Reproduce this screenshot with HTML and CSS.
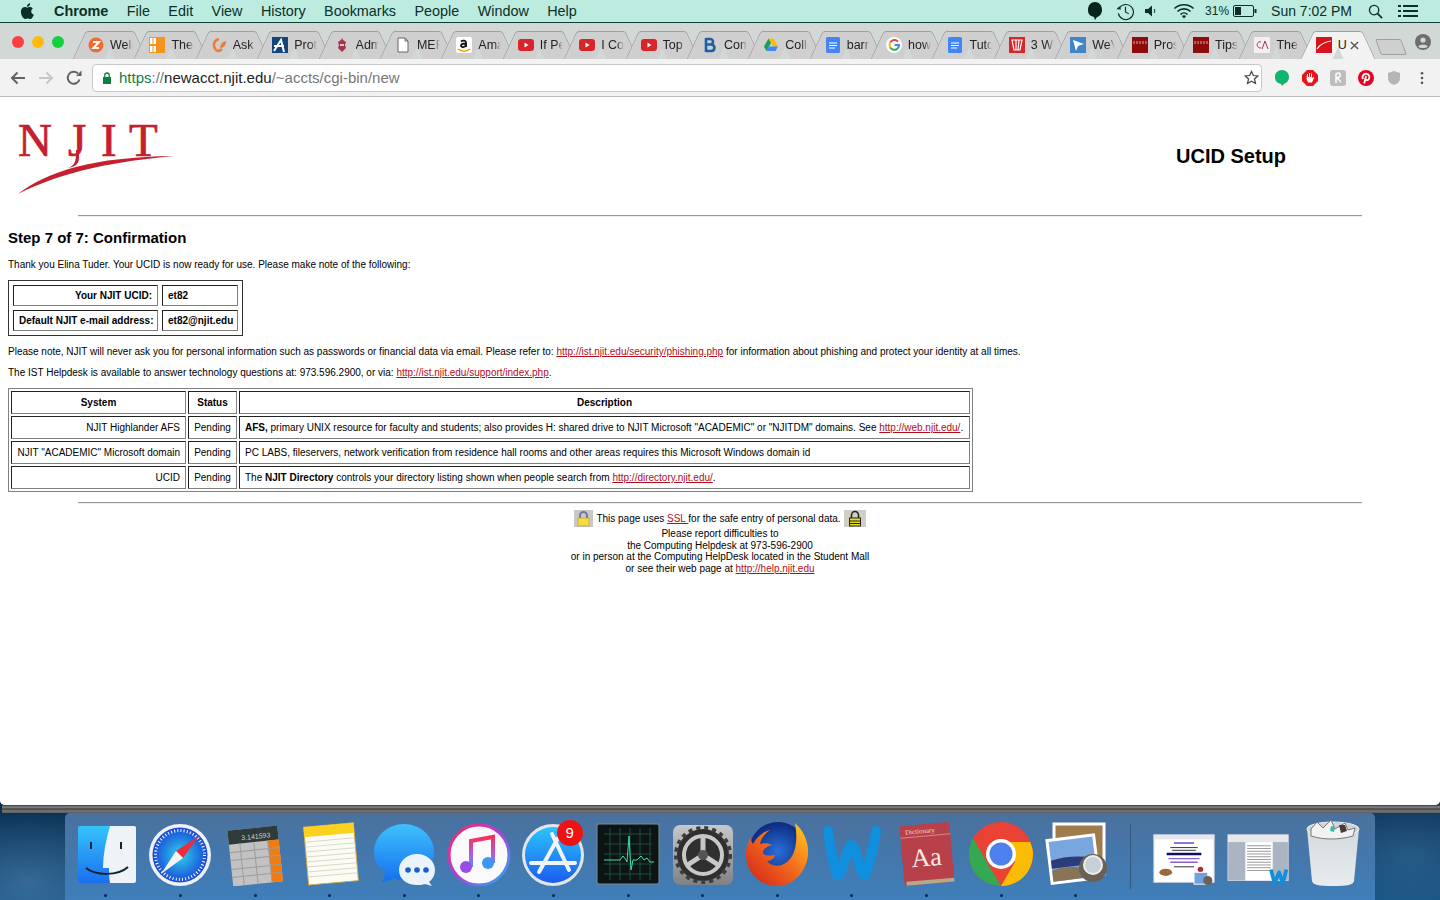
FILE: index.html
```html
<!DOCTYPE html>
<html>

<head>
    <meta charset="utf-8">
    <title>UCID Setup</title>
    <link rel="stylesheet" href="styles.css">
</head>

<body>
    <!-- mac menu bar -->
    <div class="menubar">
        <svg class="apple" viewBox="0 0 15 17"><path fill="#0b2f28" d="M11.2 8.5c0-1.9 1.600-2.800 1.600-2.900-.9-1.300-2.200-1.500-2.700-1.500-1.200-.1-2.200.7-2.800.7-.6 0-1.500-.7-2.500-.7C3.500 4.100 2.300 4.900 1.600 6.100.2 8.500 1.200 12.100 2.600 14.100c.7 1 1.500 2.100 2.500 2 1 0 1.400-.6 2.600-.6s1.500.6 2.600.6c1.100 0 1.800-1 2.400-2 .8-1.100 1.100-2.200 1.100-2.300 0 0-2.600-1-2.600-3.300zM9.300 2.700C9.800 2 10.200 1.100 10.100.2 9.300.2 8.400.7 7.800 1.400c-.5.6-1 1.500-.8 2.400.9.100 1.800-.4 2.300-1.100z"/></svg>
        <span class="menu-item menu-app">Chrome</span>
        <span class="menu-item">File</span>
        <span class="menu-item">Edit</span>
        <span class="menu-item">View</span>
        <span class="menu-item">History</span>
        <span class="menu-item">Bookmarks</span>
        <span class="menu-item">People</span>
        <span class="menu-item">Window</span>
        <span class="menu-item">Help</span>
        <div class="status">
            <svg class="st-bubble" viewBox="0 0 16 20"><path fill="#06231c" d="M8 1c4 0 7 3 7 8 0 4-3 7-5 7l-2 3-1-3C3 15 1 13 1 9c0-5 3-8 7-8z"/></svg>
            <svg class="st-clock" viewBox="0 0 20 20"><path fill="none" stroke="#0b2f28" stroke-width="1.200" d="M3.500 6.500A8 8 0 1 1 2.500 12M10 5v5.500l3.500 2"/><path fill="#0b2f28" d="M0.500 7.500l3-3 2 3.500z"/></svg>
            <svg class="st-vol" viewBox="0 0 14 14"><path fill="#0b2f28" d="M1 5h3l4-3.500v11L4 9H1z"/><path fill="none" stroke="#0b2f28" d="M10 5c1 1 1 3 0 4"/></svg>
            <svg class="st-wifi" viewBox="0 0 22 16"><path fill="none" stroke="#0b2f28" stroke-width="1.600" d="M1.500 5.500c5-5 14-5 19 0M4.500 8.500c3.500-3.500 9.500-3.500 13 0M7.500 11.500c2-2 5-2 7 0"/><path fill="#0b2f28" d="M11 15.500l-2.200-2.400c1.200-1 3.200-1 4.400 0z"/></svg>
            <span class="st-pct">31%</span>
            <svg class="st-batt" viewBox="0 0 24 12"><rect x=".5" y=".5" width="20" height="11" rx="1.500" fill="none" stroke="#0b2f28"/><rect x="2" y="2" width="6" height="8" fill="#0b2f28"/><rect x="21.500" y="4" width="2" height="4" fill="#0b2f28"/></svg>
            <span class="st-time">Sun 7:02 PM</span>
            <svg class="st-search" viewBox="0 0 16 16"><circle cx="6.500" cy="6.500" r="5" fill="none" stroke="#0b2f28" stroke-width="1.400"/><path stroke="#0b2f28" stroke-width="1.800" d="M10 10l5 5"/></svg>
            <svg class="st-list" viewBox="0 0 20 14"><path stroke="#0b2f28" stroke-width="2" d="M5 2h15M5 7h15M5 12h15M0 2h3M0 7h3M0 12h3"/></svg>
        </div>
    </div>

    <div class="window">
        <!-- tab strip -->
        <div class="tabstrip">
            <div class="lights"><i class="light red"></i><i class="light amber"></i><i class="light green"></i></div>
            <div class="tabs">
                <div class="tab"><svg class="fav" viewBox="0 0 16 16"><circle cx="8" cy="8" r="7.500" fill="#f26a2e"/><path fill="none" stroke="#fff" stroke-width="2" d="M5 5h6L5.500 11H11"/></svg><span class="tab-label">Welc</span></div>
                <div class="tab"><svg class="fav" viewBox="0 0 16 16"><rect width="16" height="16" fill="#f7941d"/><path fill="#fff" d="M1 1h2.500v6H1zM1 9h2.500v6H1zM4.500 1H7v6H4.500zM4.500 9H7v6H4.500z"/></svg><span class="tab-label">The</span></div>
                <div class="tab"><svg class="fav" viewBox="0 0 16 16"><path fill="none" stroke="#ef7a3c" stroke-width="2.500" d="M8 2C3 3 1 9 5 13c2 1.500 4 1 6-1"/><path fill="#ef7a3c" d="M15 4c0 4-2 7-6 7 0-3 2-6 6-7z"/></svg><span class="tab-label">Ask</span></div>
                <div class="tab"><svg class="fav" viewBox="0 0 16 16"><rect width="16" height="16" fill="#14447c"/><path fill="none" stroke="#fff" stroke-width="2" d="M2 14L9 3l3 12M2 9h10"/></svg><span class="tab-label">Prot</span></div>
                <div class="tab"><svg class="fav" viewBox="0 0 16 16"><path fill="#a8324a" d="M8 1l1 2 3 2-1 3 1 3-4 4-4-4 1-3-1-3 3-2z"/><path fill="#e8c8cc" d="M6 7h4v2H6z"/></svg><span class="tab-label">Adm</span></div>
                <div class="tab"><svg class="fav" viewBox="0 0 16 16"><path fill="#fff" stroke="#666" d="M3 1h7l3 3v11H3z"/><path fill="none" stroke="#666" d="M10 1v3h3"/></svg><span class="tab-label">MER</span></div>
                <div class="tab"><svg class="fav" viewBox="0 0 16 16"><rect width="16" height="16" rx="2" fill="#fff"/><path fill="none" stroke="#111" stroke-width="1.800" d="M5 4.500c2-1.500 5-1 5 1V10M10 6.500c-3 0-5 .5-5 2.200 0 2 4 1.800 5-.5"/><path fill="none" stroke="#f90" stroke-width="1.500" d="M2 12c3 3 9 3 12 0"/></svg><span class="tab-label">Ama</span></div>
                <div class="tab"><svg class="fav" viewBox="0 0 16 16"><rect y="2" width="16" height="12" rx="3" fill="#d9252a"/><path fill="#fff" d="M6.500 5.500l4 2.500-4 2.500z"/></svg><span class="tab-label">If Pe</span></div>
                <div class="tab"><svg class="fav" viewBox="0 0 16 16"><rect y="2" width="16" height="12" rx="3" fill="#d9252a"/><path fill="#fff" d="M6.500 5.500l4 2.500-4 2.500z"/></svg><span class="tab-label">I Co</span></div>
                <div class="tab"><svg class="fav" viewBox="0 0 16 16"><rect y="2" width="16" height="12" rx="3" fill="#d9252a"/><path fill="#fff" d="M6.500 5.500l4 2.500-4 2.500z"/></svg><span class="tab-label">Top</span></div>
                <div class="tab"><svg class="fav" viewBox="0 0 16 16"><path fill="none" stroke="#1d5fa8" stroke-width="2.600" d="M4 1v14M4 2h4c4 0 4 5.500 0 5.500H4M4 7.500h5c4.500 0 4.500 6.500 0 6.500H4"/></svg><span class="tab-label">Com</span></div>
                <div class="tab"><svg class="fav" viewBox="0 0 16 16"><path fill="#fbbc04" d="M5.500 1.500h5L15 9.500h-5z"/><path fill="#1a9c5c" d="M5.500 1.500L1 9.500l2.500 4.500L8 6z"/><path fill="#4285f4" d="M3.500 14h9L15 9.500H6z"/></svg><span class="tab-label">Colle</span></div>
                <div class="tab"><svg class="fav" viewBox="0 0 16 16"><rect x="1" width="14" height="16" rx="1.500" fill="#4285f4"/><path stroke="#fff" d="M4 6h8M4 8.500h8M4 11h6"/></svg><span class="tab-label">barr</span></div>
                <div class="tab"><svg class="fav" viewBox="0 0 16 16"><circle cx="8" cy="8" r="8" fill="#fff"/><path fill="none" stroke="#ea4335" stroke-width="2" d="M12 4.500A5 5 0 0 0 4.200 5.500"/><path fill="none" stroke="#fbbc05" stroke-width="2" d="M4.200 5.500a5 5 0 0 0 0 5"/><path fill="none" stroke="#34a853" stroke-width="2" d="M4.200 10.500a5 5 0 0 0 7.500 1"/><path fill="none" stroke="#4285f4" stroke-width="2" d="M11.700 11.500A5 5 0 0 0 13 8H8.500"/></svg><span class="tab-label">how</span></div>
                <div class="tab"><svg class="fav" viewBox="0 0 16 16"><rect x="1" width="14" height="16" rx="1.500" fill="#4285f4"/><path stroke="#fff" d="M4 6h8M4 8.500h8M4 11h6"/></svg><span class="tab-label">Tuto</span></div>
                <div class="tab"><svg class="fav" viewBox="0 0 16 16"><rect width="16" height="16" fill="#d9252a"/><path fill="none" stroke="#fff" stroke-width="1.200" d="M3 3h10L11 13H5zM7 3l0 10M10 3l-1 10"/></svg><span class="tab-label">3 W</span></div>
                <div class="tab"><svg class="fav" viewBox="0 0 16 16"><rect width="16" height="16" fill="#3f86c9"/><path fill="#fff" d="M3 3l11 4-6 2-2 5z"/></svg><span class="tab-label">WeV</span></div>
                <div class="tab"><svg class="fav" viewBox="0 0 16 16"><rect width="16" height="16" fill="#8e0b0b"/><path stroke="#f4d6d6" stroke-width=".8" d="M2 4v3M5 4v3M8 4v3M11 4v3M14 4v3"/></svg><span class="tab-label">Pros</span></div>
                <div class="tab"><svg class="fav" viewBox="0 0 16 16"><rect width="16" height="16" fill="#8e0b0b"/><path stroke="#f4d6d6" stroke-width=".8" d="M2 4v3M5 4v3M8 4v3M11 4v3M14 4v3"/></svg><span class="tab-label">Tips</span></div>
                <div class="tab"><svg class="fav" viewBox="0 0 16 16"><rect width="16" height="16" fill="#f4f0f2"/><path fill="none" stroke="#a03060" d="M7 5c-4-2-6 6 0 6M8 12l3-8 3 8"/></svg><span class="tab-label">The</span></div>
                <div class="tab tab-active"><svg class="fav" viewBox="0 0 16 16"><rect width="16" height="16" fill="#d8131c"/><path fill="none" stroke="#fff" stroke-width="1.200" d="M1 12C4 7 9 5 15 4"/></svg><span class="tab-label tab-label-short">U</span><svg class="tab-close" viewBox="0 0 10 10"><path stroke="#555" stroke-width="1.500" d="M1 1l8 8M9 1l-8 8"/></svg></div>
            </div>
            <div class="newtab"></div>
            <svg class="profile" viewBox="0 0 16 16"><circle cx="8" cy="8" r="8" fill="#6e6e6e"/><circle cx="8" cy="6" r="2.600" fill="#d2d8d6"/><path fill="#d2d8d6" d="M3.200 12.500c1-2.500 8.600-2.500 9.600 0-2 2-7.600 2-9.600 0z"/></svg>
        </div>

        <!-- url bar and extensions -->
        <div class="toolbar">
            <svg class="nav nav-back" viewBox="0 0 16 14"><path fill="none" stroke="#5f6368" stroke-width="2" d="M15 7H2M7.500 1.500L2 7l5.500 5.500"/></svg>
            <svg class="nav nav-fwd" viewBox="0 0 16 14"><path fill="none" stroke="#c4c6c8" stroke-width="2" d="M1 7h13M8.500 1.500L14 7l-5.500 5.500"/></svg>
            <svg class="nav nav-reload" viewBox="0 0 16 16"><path fill="none" stroke="#5f6368" stroke-width="2" d="M13.500 9.500A6 6 0 1 1 12 3.500"/><path fill="#5f6368" d="M10 6h5.500V.500z"/></svg>
            <div class="omnibox">
                <svg class="lock" viewBox="0 0 10 12"><path fill="#0b8043" d="M1 5h8v7H1z"/><path fill="none" stroke="#0b8043" stroke-width="1.300" d="M2.800 5V3.200a2.200 2.200 0 0 1 4.400 0V5"/></svg>
                <span class="url"><span class="url-scheme">https</span><span class="url-path">://</span><span class="url-host">newacct.njit.edu</span><span class="url-path">/~accts/cgi-bin/new</span></span>
                <svg class="star" viewBox="0 0 16 16"><path fill="none" stroke="#444" stroke-width="1.300" d="M8 1.500l2 4.400 4.700.5-3.500 3.200 1 4.700L8 11.900l-4.200 2.400 1-4.700L1.300 6.400 6 5.900z"/></svg>
            </div>
            <div class="extensions">
                <svg class="ext" viewBox="0 0 16 16"><path fill="#0fb46f" d="M8 0c4 0 7 3 7 7 0 4-3 6-5 7l-2 2-1-2C3 13 1 11 1 7c0-4 3-7 7-7z"/></svg>
                <svg class="ext" viewBox="0 0 16 16"><path fill="#e8141c" d="M5 0h6l5 5v6l-5 5H5l-5-5V5z"/><path fill="#fff" d="M5 4h1v3h1V3h1v4h1V3.500h1V8l1.500-1 .5 1-2 4.500H6L4.500 9z"/></svg>
                <svg class="ext" viewBox="0 0 16 16"><rect width="16" height="16" rx="3" fill="#bdbdbd"/><path fill="none" stroke="#fff" stroke-width="1.500" d="M6 13V4c2-2 5-1 4 2-.5 1.500-2 2-4 2 3 0 3 3 5 4"/></svg>
                <svg class="ext" viewBox="0 0 16 16"><circle cx="8" cy="8" r="8" fill="#e60023"/><path fill="none" stroke="#fff" stroke-width="1.800" d="M5 9C3.500 6 6 3.500 8.500 3.800c3 .3 3.500 3.500 2.200 5.500-1 1.500-3 1.200-3-.5M8 6l-1.800 7.500"/></svg>
                <svg class="ext" viewBox="0 0 16 16"><path fill="#b5b5b5" d="M8 1l6 2v5c0 4-3 6-6 7-3-1-6-3-6-7V3z"/></svg>
                <svg class="ext ext-menu" viewBox="0 0 4 16"><g fill="#555"><circle cx="2" cy="2.500" r="1.500"/><circle cx="2" cy="8" r="1.500"/><circle cx="2" cy="13.500" r="1.500"/></g></svg>
            </div>
        </div>

        <!-- the actual page -->
        <div class="page">
            <div class="page-head">
                <svg class="logo" viewBox="0 0 170 90">
                    <text x="10" y="47" class="logo-txt">N</text>
                    <text x="60" y="47" class="logo-txt">J</text>
                    <text x="93" y="47" class="logo-txt">I</text>
                    <text x="121" y="47" class="logo-txt">T</text>
                    <path fill="#c4202f" d="M10 85C40 62 85 48 166 47 110 52 55 62 10 85z"/>
                    <path fill="#c4202f" d="M60 59c6-2 8-6 8-14l0-4 3 0 0 8c0 6-4 9-11 10z"/>
                </svg>
                <h1 class="page-title">UCID Setup</h1>
            </div>
            <hr class="rule">
            <h2 class="step">Step 7 of 7: Confirmation</h2>
            <p class="note note-first">Thank you Elina Tuder. Your UCID is now ready for use. Please make note of the following:</p>
            <table class="info">
                <tr><td class="info-key">Your NJIT UCID:</td><td class="info-val">et82</td></tr>
                <tr><td class="info-key">Default NJIT e-mail address:</td><td class="info-val">et82@njit.edu</td></tr>
            </table>
            <p class="note note-phish">Please note, NJIT will never ask you for personal information such as passwords or financial data via email. Please refer to: <a href="#">http://ist.njit.edu/security/phishing.php</a> for information about phishing and protect your identity at all times.</p>
            <p class="note note-help">The IST Helpdesk is available to answer technology questions at: 973.596.2900, or via: <a href="#">http://ist.njit.edu/support/index.php</a>.</p>
            <table class="systems">
                <tr><th class="col-sys">System</th><th class="col-status">Status</th><th class="col-desc">Description</th></tr>
                <tr><td class="sys">NJIT Highlander AFS</td><td class="status-cell">Pending</td><td class="desc"><b>AFS,</b> primary UNIX resource for faculty and students; also provides H: shared drive to NJIT Microsoft "ACADEMIC" or "NJITDM" domains. See <a href="#">http://web.njit.edu/</a>.</td></tr>
                <tr><td class="sys">NJIT "ACADEMIC" Microsoft domain</td><td class="status-cell">Pending</td><td class="desc">PC LABS, fileservers, network verification from residence hall rooms and other areas requires this Microsoft Windows domain id</td></tr>
                <tr><td class="sys">UCID</td><td class="status-cell">Pending</td><td class="desc">The <b>NJIT Directory</b> controls your directory listing shown when people search from <a href="#">http://directory.njit.edu/</a>.</td></tr>
            </table>
            <hr class="rule rule-foot">
            <div class="foot">
                <div class="foot-ssl">
                    <svg class="padlock" viewBox="0 0 19 17"><rect width="19" height="17" fill="#c8c8c8"/><path fill="none" stroke="#77779a" stroke-width="2" d="M6 9V5.500a3.500 3.500 0 0 1 7 0V9"/><rect x="4" y="8" width="11" height="8" fill="#f5d94a" stroke="#b89a20" stroke-width=".6"/></svg>
                    <span>This page uses <a href="#">SSL </a>for the safe entry of personal data.</span>
                    <svg class="padlock" viewBox="0 0 22 17"><rect width="22" height="17" fill="#cfcfc8"/><path fill="none" stroke="#222" stroke-width="1.500" d="M7.500 8V5a3.500 3.500 0 0 1 7 0v3"/><rect x="5.500" y="8" width="11" height="8" fill="#e4e020" stroke="#222"/><path stroke="#222" d="M6 11h10M6 13.500h10"/></svg>
                </div>
                Please report difficulties to<br>
                the Computing Helpdesk at 973-596-2900<br>
                or in person at the Computing HelpDesk located in the Student Mall<br>
                or see their web page at <a href="#">http://help.njit.edu</a>
            </div>
        </div>
    </div>
    <div class="window-edge"></div>

    <!-- dock -->
    <div class="dock">
        <div class="dock-item"><svg class="dock-icon" viewBox="0 0 64 64">
            <defs><linearGradient id="fnd" x1="0" y1="0" x2="0" y2="1"><stop offset="0" stop-color="#35c3fb"/><stop offset="1" stop-color="#1a6ff0"/></linearGradient></defs>
            <rect x="4" y="4" width="58" height="57" rx="2" fill="url(#fnd)"/>
            <path fill="#eef3f8" d="M36 4h24a2 2 0 0 1 2 2v53a2 2 0 0 1-2 2H36c-1-6-1-10-1-15h-6c0-14 3-28 7-42z"/>
            <path stroke="#123" stroke-width="2" d="M17 20v7M47 20v7"/>
            <path fill="none" stroke="#123" stroke-width="2" d="M12 46c10 8 32 8 42-1"/>
        </svg><i class="dot"></i></div>
        <div class="dock-item"><svg class="dock-icon" viewBox="0 0 64 64">
            <defs><radialGradient id="saf"><stop offset="0" stop-color="#2fd3ee"/><stop offset="1" stop-color="#1a48d8"/></radialGradient></defs>
            <circle cx="32" cy="33" r="31" fill="#eef2f5"/>
            <circle cx="32" cy="33" r="27.500" fill="url(#saf)"/>
            <circle cx="32" cy="33" r="24.500" fill="none" stroke="#fff" stroke-width="3" stroke-dasharray="1 2.200"/>
            <path fill="#ee2c3c" d="M51 14L28 29l7 7z"/>
            <path fill="#f5f5f5" d="M13 52l15-23 7 7z"/>
        </svg><i class="dot"></i></div>
        <div class="dock-item"><svg class="dock-icon" viewBox="0 0 64 64"><g transform="rotate(-6 32 32)">
            <rect x="7" y="6" width="50" height="56" fill="#c2c2c2"/>
            <rect x="7" y="6" width="50" height="14" fill="#2f3a3a"/>
            <text x="20" y="17" class="calc-txt">3.141593</text>
            <rect x="46" y="20" width="11" height="42" fill="#ef7b11"/>
            <path stroke="#9c9c9c" d="M18 20v42M32 20v42M46 20v42M7 28h50M7 36h50M7 45h50M7 53h50"/>
        </g></svg><i class="dot"></i></div>
        <div class="dock-item"><svg class="dock-icon" viewBox="0 0 64 64"><g transform="rotate(-5 32 32)">
            <rect x="8" y="3" width="50" height="58" fill="#fdfcf2" stroke="#c9a64a"/>
            <rect x="8" y="3" width="50" height="10" fill="#fbd31e"/>
            <path stroke="#d8d8d2" d="M8 18h50M8 23h50M8 28h50M8 33h50M8 38h50M8 43h50M8 48h50M8 53h50"/>
        </g></svg><i class="dot"></i></div>
        <div class="dock-item"><svg class="dock-icon" viewBox="0 0 64 64">
            <defs><linearGradient id="msg" x1="0" y1="0" x2="0" y2="1"><stop offset="0" stop-color="#3fc0fb"/><stop offset="1" stop-color="#1570ef"/></linearGradient></defs>
            <path fill="url(#msg)" d="M32 2c16 0 30 12 30 28S48 58 32 58c-4 0-8-.5-11-2-3 3-8 4-12 4 3-3 4-6 4-10C6 45 2 38 2 30 2 14 16 2 32 2z"/>
            <path fill="#eaf3fb" d="M45 32c10 0 18 7 18 16 0 5-2 9-6 12l3 4-7-2c-3 1-5 1-8 1-10 0-18-6-18-15s8-16 18-16z"/>
            <g fill="#1b5fc4"><circle cx="36" cy="48" r="2.800"/><circle cx="45" cy="48" r="2.800"/><circle cx="54" cy="48" r="2.800"/></g>
        </svg><i class="dot"></i></div>
        <div class="dock-item"><svg class="dock-icon" viewBox="0 0 64 64">
            <defs><linearGradient id="itn" x1="0" y1="0" x2="1" y2="1"><stop offset="0" stop-color="#f52c5c"/><stop offset=".5" stop-color="#b43ce0"/><stop offset="1" stop-color="#1cb5f0"/></linearGradient>
            <linearGradient id="itn2" x1="0" y1="0" x2="0" y2="1"><stop offset="0" stop-color="#f7305a"/><stop offset=".6" stop-color="#b05ae8"/><stop offset="1" stop-color="#3a9cf2"/></linearGradient></defs>
            <circle cx="32" cy="33" r="30" fill="#fafafa" stroke="url(#itn)" stroke-width="3"/>
            <path fill="none" stroke="url(#itn2)" stroke-width="4" d="M24 45V19l22-4v26"/>
            <circle cx="19" cy="45" r="6" fill="#9a4ce8"/><circle cx="41" cy="41" r="6" fill="#3d96f0"/>
        </svg><i class="dot"></i></div>
        <div class="dock-item"><svg class="dock-icon" viewBox="0 0 64 64">
            <defs><linearGradient id="aps" x1="0" y1="0" x2="0" y2="1"><stop offset="0" stop-color="#2bc4fb"/><stop offset="1" stop-color="#1c5cee"/></linearGradient></defs>
            <circle cx="32" cy="33" r="31" fill="#e2e6ea"/>
            <circle cx="32" cy="33" r="28" fill="url(#aps)"/>
            <path stroke="#f0f4f8" stroke-width="4" stroke-linecap="round" d="M31 12l17 36M37 16L18 50M10 41h44"/>
        </svg><span class="badge">9</span><i class="dot"></i></div>
        <div class="dock-item"><svg class="dock-icon" viewBox="0 0 64 64">
            <rect x="1" y="2" width="62" height="60" rx="2" fill="#0d1414" stroke="#7a8c94"/>
            <path stroke="#1f4a40" d="M8 12h48M8 22h48M8 32h48M8 42h48M8 52h48M14 6v52M24 6v52M34 6v52M44 6v52M54 6v52"/>
            <path fill="none" stroke="#3ae0a8" d="M8 38h16l3-4 3 4 1 2 2-26 2 34 2-10h4l4-4 3 4 3-2 3 4h4"/>
        </svg><i class="dot"></i></div>
        <div class="dock-item"><svg class="dock-icon" viewBox="0 0 64 64">
            <defs><linearGradient id="prf" x1="0" y1="0" x2="0" y2="1"><stop offset="0" stop-color="#c6c8ca"/><stop offset="1" stop-color="#7e8285"/></linearGradient></defs>
            <rect x="2" y="3" width="60" height="60" rx="7" fill="url(#prf)"/>
            <circle cx="32" cy="33" r="26" fill="#2f2f2f"/>
            <circle cx="32" cy="33" r="27" fill="none" stroke="#3c3c3c" stroke-width="4" stroke-dasharray="4 4"/>
            <circle cx="32" cy="33" r="19" fill="none" stroke="#c8c8c8" stroke-width="4"/>
            <path stroke="#c8c8c8" stroke-width="5" d="M32 33V14M32 33L15 44M32 33l17 11"/>
            <circle cx="32" cy="33" r="5" fill="#555"/>
        </svg><i class="dot"></i></div>
        <div class="dock-item"><svg class="dock-icon dock-icon-tall" viewBox="0 0 64 68">
            <defs><radialGradient id="fxg"><stop offset="0" stop-color="#2a6fd8"/><stop offset="1" stop-color="#0c2a80"/></radialGradient>
            <linearGradient id="fxo" x1="1" y1="0" x2="0" y2="1"><stop offset="0" stop-color="#ffd21f"/><stop offset=".45" stop-color="#f4701d"/><stop offset="1" stop-color="#d11b1b"/></linearGradient></defs>
            <circle cx="33" cy="32" r="29" fill="url(#fxg)"/>
            <path fill="url(#fxo)" d="M50 4c9 8 14 20 13 32-2 18-15 31-32 31C14 67 0 52 1 34c0-6 2-11 5-15 0 3 1 5 2 6 3-6 9-12 17-14-6 4-9 9-10 14 3-1 8-1 12 1-4 1-8 3-9 7 0 4 6 4 12 3-1 4-5 6-8 6 4 6 14 6 20 1 9-7 11-22 8-39z"/>
        </svg><i class="dot"></i></div>
        <div class="dock-item"><svg class="dock-icon" viewBox="0 0 64 64">
            <path fill="none" stroke="#0f8fde" stroke-width="10" stroke-linecap="round" stroke-linejoin="round" d="M8 9c2 15 5 30 9 44 5 4 9-26 14-30 6 0 8 30 14 30 5-14 9-29 11-44"/>
        </svg><i class="dot"></i></div>
        <div class="dock-item"><svg class="dock-icon" viewBox="0 0 64 64"><g transform="rotate(-5 32 32)">
            <rect x="8" y="2" width="50" height="60" rx="2" fill="#b8404a"/>
            <rect x="10" y="58" width="48" height="4" fill="#b8a888"/>
            <path stroke="#d68a8a" d="M8 14h50"/>
            <text x="13" y="11" class="dict-name">Dictionary</text>
            <text x="17" y="44" class="dict-aa">Aa</text>
        </g></svg><i class="dot"></i></div>
        <div class="dock-item"><svg class="dock-icon" viewBox="0 0 64 64">
            <circle cx="32" cy="32" r="32" fill="#ea4335"/>
            <path fill="#34a853" d="M4 16L20 44l12 20C14 64 0 50 0 32c0-6 1.500-11 4-16z"/>
            <path fill="#fbbc05" d="M32 20h29c2 4 3 8 3 12 0 18-14 32-32 32l14-24z"/>
            <circle cx="32" cy="32" r="15" fill="#fff"/>
            <circle cx="32" cy="32" r="11.500" fill="#4e80ee"/>
        </svg><i class="dot"></i></div>
        <div class="dock-item"><svg class="dock-icon" viewBox="0 0 64 64">
            <rect x="10" y="2" width="50" height="50" fill="#a07c4c" stroke="#fff" stroke-width="3"/>
            <g transform="rotate(-7 30 38)">
                <rect x="4" y="14" width="50" height="46" fill="#fff"/>
                <rect x="7" y="17" width="44" height="40" fill="#7aa6e0"/>
                <path fill="#2c3c78" d="M7 36c12-3 28-2 44 2v6H7z"/>
                <path fill="#8a7458" d="M7 46c14-4 30 0 44 4v7H7z"/>
            </g>
            <circle cx="49" cy="46" r="14" fill="#6b6055"/>
            <circle cx="49" cy="43" r="9" fill="#c6d0d6" stroke="#eee" stroke-width="2"/>
        </svg><i class="dot"></i></div>
        <div class="dock-sep"></div>
        <div class="dock-item"><svg class="dock-icon" viewBox="0 0 70 70">
            <rect x="2" y="14" width="66" height="52" fill="#fff" stroke="#ccd"/>
            <rect x="2" y="14" width="66" height="5" fill="#e4e6ea"/>
            <path stroke="#6a2fc8" stroke-width="1.500" d="M24 23h22"/>
            <path stroke="#222" stroke-width="1" d="M20 28h30M22 31h26"/>
            <path stroke="#101060" stroke-width="3" d="M16 35h38"/>
            <path stroke="#8a5fd8" stroke-width="1.500" d="M18 40h34M20 44h30"/>
            <path stroke="#222" stroke-width="1" d="M24 49h22"/>
            <ellipse cx="15" cy="55" rx="7" ry="4" fill="#9a6a3a"/>
            <circle cx="53" cy="52" r="3" fill="#a83030"/>
            <rect x="46" y="55" width="15" height="13" fill="#6fa0e0" stroke="#fff"/>
            <circle cx="61" cy="64" r="5" fill="#6b6055"/>
        </svg></div>
        <div class="dock-item"><svg class="dock-icon" viewBox="0 0 70 70">
            <rect x="1" y="14" width="66" height="50" fill="#aab4c2" stroke="#ccd"/>
            <rect x="1" y="14" width="66" height="8" fill="#e6e8ec"/>
            <rect x="20" y="22" width="30" height="42" fill="#fff"/>
            <path stroke="#777" stroke-width=".8" d="M22 26h26M22 29h26M22 32h26M22 35h26M22 38h26M22 41h26M22 44h26M22 47h26M22 50h26M22 53h26"/>
            <path fill="none" stroke="#0f8fde" stroke-width="4" stroke-linejoin="round" d="M48 52l4 15 5-12 4 12 4-15"/>
        </svg></div>
        <div class="dock-item"><svg class="dock-icon dock-icon-tall" viewBox="0 0 64 68">
            <defs><linearGradient id="trs" x1="0" y1="0" x2="0" y2="1"><stop offset="0" stop-color="#d4dadd"/><stop offset="1" stop-color="#e8ecee"/></linearGradient></defs>
            <path fill="url(#trs)" d="M6 10h52l-5 52c-1 4-6 5-21 5s-20-1-21-5z"/>
            <ellipse cx="32" cy="10" rx="26" ry="7" fill="#cfd4d6" stroke="#eee"/>
            <path fill="#f2f2f2" stroke="#777" d="M10 10l6-7 6 6 8-8 4 9 10-6 3 7 7-2-2 8c-14 4-30 4-42 0z"/>
            <path fill="#4a3a3a" d="M38 6l6 0 2 6-6 2z"/><path fill="#3ab8a8" d="M30 7l4 1-1 5-4-1z"/>
        </svg></div>
    </div>
</body>

</html>
```
FILE: styles.css
```css
* {
    box-sizing: border-box;
}

html, body {
    height: 100%;
}

body {
    margin: 0;
    height: 900px;
    overflow: hidden;
    display: flex;
    flex-direction: column;
    font-family: "Liberation Sans", Arial, sans-serif;
    color: #000;
    background-color: #0f3f6a;
    background-image:
        radial-gradient(ellipse at 2% 98%, rgba(120, 165, 205, 0.35), rgba(120, 165, 205, 0) 6%),
        radial-gradient(ellipse at 98% 95%, rgba(90, 150, 200, 0.3), rgba(90, 150, 200, 0) 6%),
        linear-gradient(#08294a 88%, #14507f);
}

/* menu bar */
.menubar {
    height: 22px;
    flex: none;
    display: flex;
    align-items: center;
    padding-left: 20px;
    background-color: #bcecdf;
    color: #0b2f28;
    font-size: 14.4px;
}

.apple {
    width: 15px;
    height: 17px;
    margin-right: 19px;
}

.menu-item {
    margin-right: 18.4px;
}

.menu-app {
    font-weight: bold;
}

.status {
    margin-left: auto;
    display: flex;
    align-items: center;
    height: 100%;
    padding-right: 22px;
}

.st-bubble { width: 16px; height: 20px; margin-right: 13px; }
.st-clock { width: 19px; height: 19px; margin-right: 9px; }
.st-vol { width: 14px; height: 14px; margin-right: 15px; }
.st-wifi { width: 22px; height: 16px; margin-right: 10px; }
.st-pct { font-size: 12px; margin-right: 4px; }
.st-batt { width: 24px; height: 12px; margin-right: 14px; }
.st-time { font-size: 14px; margin-right: 16px; }
.st-search { width: 15px; height: 15px; margin-right: 15px; }
.st-list { width: 20px; height: 14px; }

/* browser window */
.window {
    flex: none;
    height: 783px;
    display: flex;
    flex-direction: column;
    background-color: #fff;
    border-radius: 0 0 5px 5px;
    overflow: hidden;
}

.tabstrip {
    height: 37px;
    flex: none;
    display: flex;
    align-items: flex-end;
    background-color: #d2d8d6;
    border-top: 1px solid #123f35;
    position: relative;
}

.lights {
    position: absolute;
    left: 12px;
    top: 13px;
    display: flex;
    gap: 8px;
}

.light {
    width: 12px;
    height: 12px;
    border-radius: 50%;
}

.red { background-color: #fc3d44; }
.amber { background-color: #fdbb0e; }
.green { background-color: #14d040; }

.tabs {
    display: flex;
    margin-left: 79px;
    height: 28px;
}

.tab {
    width: 61.4px;
    height: 28px;
    position: relative;
    display: flex;
    align-items: center;
    padding: 0 0 0 9px;
    font-size: 12.5px;
    color: #222;
    isolation: isolate;
}

.tab:before, .tab:after {
    content: "";
    position: absolute;
    top: 0;
    bottom: 0;
    width: 50%;
    z-index: -1;
    background-color: #cfcfcf;
    border-top: 1px solid #a0a0a0;
}

.tab:before {
    left: 0;
    border-left: 1px solid #a0a0a0;
    border-top-left-radius: 3px;
    transform: skewX(-25deg);
}

.tab:after {
    right: 0;
    border-right: 1px solid #a0a0a0;
    border-top-right-radius: 3px;
    transform: skewX(25deg);
}

.tab-active {
    z-index: 2;
}

.tab-active:before, .tab-active:after {
    background-color: #f2f2f2;
}

.fav {
    width: 16px;
    height: 16px;
    flex: none;
    margin-right: 6px;
}

.tab-label {
    width: 23px;
    overflow: hidden;
    white-space: nowrap;
    -webkit-mask-image: linear-gradient(to right, #000 70%, transparent);
    mask-image: linear-gradient(to right, #000 70%, transparent);
}

.tab-label-short {
    width: 10px;
    -webkit-mask-image: none;
    mask-image: none;
}

.tab-close {
    width: 9px;
    height: 9px;
    margin-left: 2px;
}

.newtab {
    width: 26px;
    height: 16px;
    margin: 0 0 4px 10px;
    background-color: #cfcfcf;
    border: 1px solid #a0a0a0;
    border-radius: 2px;
    transform: skewX(20deg);
}

.profile {
    width: 16px;
    height: 16px;
    position: absolute;
    right: 9px;
    top: 11px;
}

/* toolbar */
.toolbar {
    height: 38px;
    flex: none;
    display: flex;
    align-items: center;
    padding-left: 10px;
    background-color: #f2f2f2;
    border-bottom: 1px solid #bdbdbd;
}

.nav {
    flex: none;
    width: 16px;
    height: 14px;
}

.nav-fwd { margin-left: 12px; }
.nav-reload { margin-left: 12px; height: 16px; }

.omnibox {
    flex: none;
    width: 1170px;
    height: 28px;
    margin-left: 10px;
    display: flex;
    align-items: center;
    padding: 0 2px 0 9px;
    background-color: #fff;
    border: 1px solid #c8c8c8;
    border-radius: 4px;
}

.lock {
    width: 10px;
    height: 12px;
    margin-right: 7px;
}

.url {
    font-size: 15px;
}

.url-scheme { color: #0b8043; }
.url-host { color: #222; }
.url-path { color: #777; }

.star {
    width: 15px;
    height: 15px;
    margin-left: auto;
}

.extensions {
    display: flex;
    align-items: center;
    padding-left: 12px;
}

.ext {
    width: 16px;
    height: 16px;
    margin-right: 12px;
}

.ext-menu {
    width: 4px;
    height: 14px;
    margin-left: 6px;
}

/* page content */
.page {
    flex: 1;
    padding: 0 8px;
    font-size: 10px;
    background-color: #fff;
}

.page a {
    color: #b30c1c;
}

.page-head {
    height: 118px;
    display: flex;
    justify-content: space-between;
    align-items: flex-start;
}

.logo {
    width: 170px;
    height: 90px;
    margin-top: 12px;
}

.logo-txt {
    font: 47px "Liberation Serif", serif;
    fill: #c4202f;
    stroke: #c4202f;
    stroke-width: 0.7px;
}

.page-title {
    margin: 48px 146px 0 0;
    font-size: 20px;
    line-height: 23px;
    font-weight: bold;
}

.rule {
    width: 90.2%;
    height: 2px;
    margin: 0 auto;
    border: 0;
    border-top: 1px solid #999;
    border-bottom: 1px solid #eee;
}

.step {
    margin: 12px 0 0;
    font-size: 15px;
    line-height: 18px;
}

.note {
    margin: 0;
    line-height: 12px;
}

.note-first { margin-top: 12px; }
.note-phish { margin-top: 10px; }
.note-help { margin-top: 9px; }

table {
    border-collapse: separate;
    font-size: 10px;
}

td, th {
    padding: 0 5px;
    border-style: solid;
    border-width: 1px;
    border-color: #222 #808080 #808080 #222;
}

.info {
    margin-top: 9px;
    width: 235px;
    border: 1px solid #333;
    border-spacing: 4px;
    font-weight: bold;
    table-layout: fixed;
}

.info td {
    height: 21px;
    white-space: nowrap;
}

.info-key {
    width: 145px;
    text-align: right;
}

.info-val {
    width: 76px;
}

.systems {
    margin-top: 9px;
    width: 965px;
    border: 1px solid #808080;
    border-spacing: 2px;
    table-layout: fixed;
}

.systems td, .systems th {
    height: 23px;
}

.col-sys { width: 175px; }
.col-status { width: 49px; }

.sys {
    text-align: right;
}

.status-cell {
    text-align: center;
}

.desc {
    white-space: nowrap;
}

.rule-foot {
    margin-top: 10px;
}

.foot {
    text-align: center;
    line-height: 11.5px;
}

.foot-ssl {
    height: 19px;
    margin-top: 5px;
    display: flex;
    justify-content: center;
    align-items: center;
    gap: 3px;
}

.padlock {
    height: 17px;
    width: auto;
}

.window-edge {
    flex: none;
    height: 8px;
    margin: 0 0 0 2px;
    background: linear-gradient(#333 0, #888 2px, #444 4px, #777 6px, #5a5a5a 8px);
}

/* dock */
.dock {
    flex: 1;
    margin: 0 65px;
    display: flex;
    padding-left: 3.6px;
    border-radius: 5px 5px 0 0;
    background: linear-gradient(#4a719e, #3f7eb9);
}

.dock-item {
    width: 74.6px;
    flex: none;
    position: relative;
    display: flex;
    flex-direction: column;
    align-items: center;
    padding-top: 9px;
}

.dock-icon {
    width: 64px;
    height: 64px;
}

.dock-icon-tall {
    margin-top: -3px;
    height: 68px;
}

.dot {
    width: 3px;
    height: 3px;
    margin-top: auto;
    margin-bottom: 3px;
    border-radius: 50%;
    background-color: #0d2550;
}

.dock-sep {
    width: 34px;
    flex: none;
    position: relative;
}

.dock-sep:before {
    content: "";
    position: absolute;
    left: 17px;
    top: 11px;
    height: 65px;
    border-left: 1px solid #33587e;
}

.badge {
    position: absolute;
    right: 8px;
    top: 7px;
    width: 26px;
    height: 26px;
    border-radius: 50%;
    background-color: #ef1212;
    color: #fff;
    font-size: 15px;
    line-height: 26px;
    text-align: center;
}

.calc-txt { font: 7px "Liberation Sans", sans-serif; fill: #c8d0d0; }
.dict-name { font: 7px "Liberation Serif", serif; fill: #f0d8d0; }
.dict-aa { font: 26px "Liberation Serif", serif; fill: #f4ece4; }
```
